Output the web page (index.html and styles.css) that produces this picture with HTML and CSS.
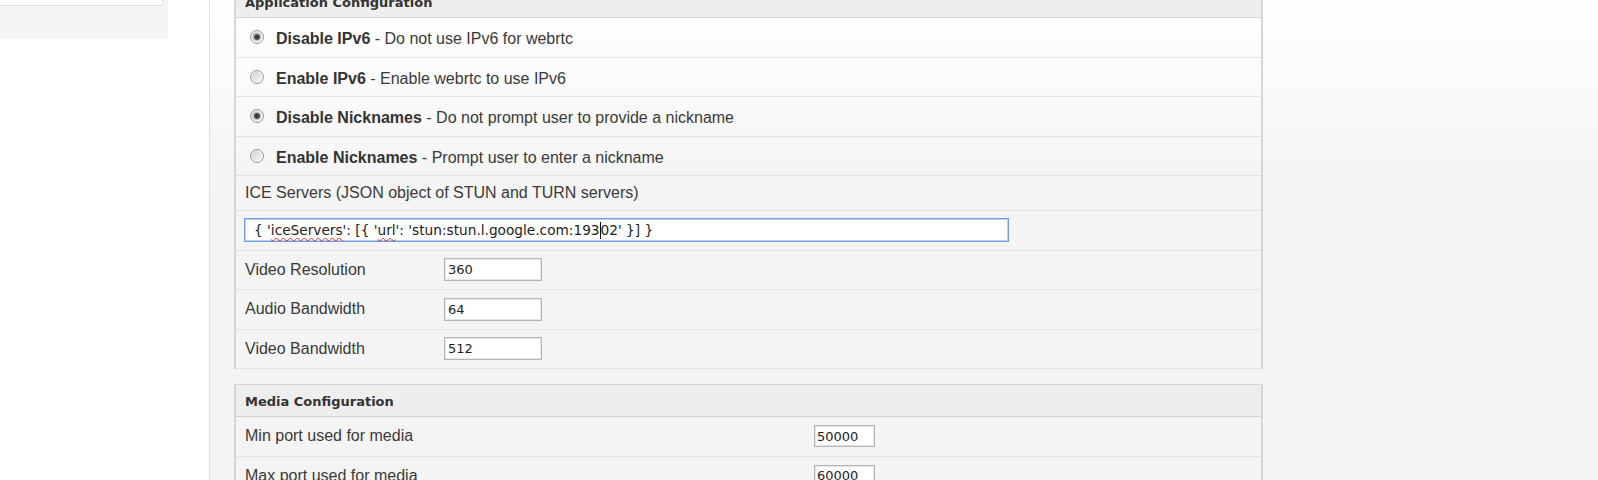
FILE: index.html
```html
<!DOCTYPE html>
<html lang="en">
<head>
<meta charset="utf-8">
<title>Configuration</title>
<link rel="stylesheet" href="styles.css">
</head>
<body>
<div class="page">
  <aside class="sidebar">
    <div class="side-panel"><div class="side-box"></div></div>
  </aside>
  <main class="main">
    <section class="cfg cfg-app">
      <div class="cfg-head">Application Configuration</div>
      <div class="row radio-row"><span class="radio checked"></span><span class="rlabel"><b>Disable IPv6</b> - Do not use IPv6 for webrtc</span></div>
      <div class="row radio-row"><span class="radio"></span><span class="rlabel"><b>Enable IPv6</b> - Enable webrtc to use IPv6</span></div>
      <div class="row radio-row"><span class="radio checked"></span><span class="rlabel"><b>Disable Nicknames</b> - Do not prompt user to provide a nickname</span></div>
      <div class="row radio-row"><span class="radio"></span><span class="rlabel"><b>Enable Nicknames</b> - Prompt user to enter a nickname</span></div>
      <div class="row label-row">ICE Servers (JSON object of STUN and TURN servers)</div>
      <div class="row">
        <div class="field json">{ '<span class="typo">iceServers</span>': [{ '<span class="typo">url</span>': 'stun:stun.l.google.com:193<span class="caret"></span>02' }] }</div>
      </div>
      <div class="row"><span class="k">Video Resolution</span><span class="field">360</span></div>
      <div class="row"><span class="k">Audio Bandwidth</span><span class="field">64</span></div>
      <div class="row"><span class="k">Video Bandwidth</span><span class="field">512</span></div>
    </section>
    <section class="cfg cfg-media">
      <div class="cfg-head">Media Configuration</div>
      <div class="row"><span class="k k-wide">Min port used for media</span><span class="field port">50000</span></div>
      <div class="row"><span class="k k-wide">Max port used for media</span><span class="field port">60000</span></div>
    </section>
  </main>
</div>
</body>
</html>
```
FILE: styles.css
```css
* { box-sizing: border-box; }
html, body { margin: 0; padding: 0; }
body {
  background: #fff;
  font-family: "Liberation Sans", Arial, sans-serif;
  color: #333;
  height: 480px;
  overflow: hidden;
}
.page { display: flex; height: 480px; }
.sidebar { width: 209px; flex: none; background: #fff; }
.side-panel { width: 168px; height: 39px; background: #f5f5f5; }
.side-box {
  width: 163px;
  height: 6px;
  background: #fff;
  border-right: 1px solid #dedede;
  border-bottom: 1px solid #dedede;
}
.main {
  flex: 1;
  border-left: 1px solid #e0e0e0;
  background: linear-gradient(to bottom, #ffffff 0px, #f4f4f4 190px, #f4f4f4 100%);
  padding-left: 24px;
}
.cfg {
  width: 1029px;
  border-style: solid;
  border-color: #d6d6d6;
  border-width: 1px 2px 0 2px;
}
.cfg-app { margin-top: -15px; margin-bottom: 15px; }
.cfg-head {
  height: 32px;
  background: #eeeeee;
  border-bottom: 1px solid #d2d2d2;
  display: flex;
  align-items: center;
  padding: 1px 9px 0;
  font-family: "DejaVu Sans", Verdana, sans-serif;
  font-weight: bold;
  font-size: 13px;
  color: #333;
}
.row {
  height: 39.5px;
  border-bottom: 1px solid #e3e3e3;
  display: flex;
  align-items: center;
  padding: 0 9px;
  font-size: 16px;
  color: #3a3a3a;
}
.label-row { height: 35px; }
.radio {
  width: 14px;
  height: 14px;
  margin-left: 5px;
  margin-right: 12px;
  border-radius: 50%;
  border: 1px solid #9a9a9a;
  background: linear-gradient(135deg, #cfcfcf 0%, #e6e6e6 55%, #f8f8f8 100%);
  box-shadow: inset 0 0 0 1px rgba(255,255,255,.6);
  display: flex;
  align-items: center;
  justify-content: center;
  flex: none;
}
.radio.checked::after {
  content: "";
  width: 6px;
  height: 6px;
  border-radius: 50%;
  background: radial-gradient(circle, #2f2f2f 0%, #4a4a4a 55%, #7a7a7a 100%);
  box-shadow: 0 0 1px 1px rgba(110,110,110,.35);
}
.rlabel { padding-top: 4px; }
.rlabel b { color: #333; }
.k { width: 199px; flex: none; }
.k-wide { width: 569px; }
.field {
  width: 98px;
  height: 23px;
  border: 1px solid #b5b5b5;
  box-shadow: inset 0 0 0 1px #e6e6e6;
  background: #fff;
  display: flex;
  align-items: center;
  padding: 0 3px;
  font-family: "DejaVu Sans", Verdana, sans-serif;
  font-size: 13px;
  color: #222;
}
.field.port { width: 61px; height: 22px; padding: 0 2px; }
.field.json {
  width: 765px;
  height: 24px;
  margin-left: -1px;
  padding-left: 9px;
  border: 1px solid #6f9ce6;
  box-shadow: inset 0 0 0 1px #b9cff3;
  white-space: pre;
  font-size: 13.7px;
}
.typo {
  text-decoration: underline wavy #e03030;
  text-decoration-thickness: 1px;
  text-underline-offset: 2px;
}
.caret {
  display: inline-block;
  width: 1px;
  height: 17px;
  background: #000;
  vertical-align: -4px;
}
```
